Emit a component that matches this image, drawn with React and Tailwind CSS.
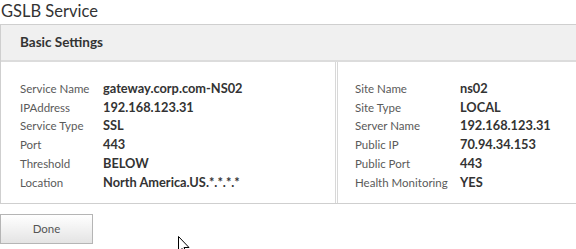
const left = [
  ["Service Name", "gateway.corp.com-NS02"],
  ["IPAddress", "192.168.123.31"],
  ["Service Type", "SSL"],
  ["Port", "443"],
  ["Threshold", "BELOW"],
  ["Location", "North America.US.*.*.*.*"],
];

const right = [
  ["Site Name", "ns02"],
  ["Site Type", "LOCAL"],
  ["Server Name", "192.168.123.31"],
  ["Public IP", "70.94.34.153"],
  ["Public Port", "443"],
  ["Health Monitoring", "YES"],
];

function Rows({ rows, labelWidth }) {
  return (
    <div className="flex flex-col">
      {rows.map(([label, value]) => (
        <div key={label} className="flex h-[18.8px] items-center">
          <span className="shrink-0 text-[11.5px] text-[#5a5a5a]" style={{ width: labelWidth }}>
            {label}
          </span>
          <span className="text-[12.8px] font-bold text-[#333]">{value}</span>
        </div>
      ))}
    </div>
  );
}

export default function App() {
  return (
    <div className="relative h-[249px] w-[576px] overflow-hidden bg-white font-['Lato',sans-serif]">
      <div className="h-[24px] pl-[1px] pt-[1px] text-[16.5px] leading-[20px] text-[#333]">GSLB Service</div>

      <div className="border border-r-0 border-[#cfcfcf]">
        <div className="flex h-[37px] items-center border-b-2 border-[#dcdcdc] bg-[#f0f0f0] pl-[19px] text-[13.5px] font-bold text-[#333]">
          Basic Settings
        </div>
        <div className="flex h-[141px]">
          <div className="w-[335px] border-r border-[#d8d8d8] pl-[19px] pt-[17px]">
            <Rows rows={left} labelWidth={83} />
          </div>
          <div className="ml-[1px] flex-1 border-l border-[#d8d8d8] pl-[17px] pt-[17px]">
            <Rows rows={right} labelWidth={105} />
          </div>
        </div>
      </div>

      <div className="pt-[10px]">
        <button className="h-[30px] w-[93px] border border-[#b5b5b5] bg-gradient-to-b from-white to-[#e4e4e4] text-[11.5px] text-[#555]">
          Done
        </button>
      </div>

      <svg className="absolute left-[178px] top-[236px]" width="12" height="19" viewBox="0 0 12 19">
        <path d="M0.5 0.5 L0.5 16 L4 12.5 L6.5 18 L8.5 17 L6 11.5 L11 11.5 Z" fill="white" stroke="black" strokeWidth="1" />
      </svg>
    </div>
  );
}
